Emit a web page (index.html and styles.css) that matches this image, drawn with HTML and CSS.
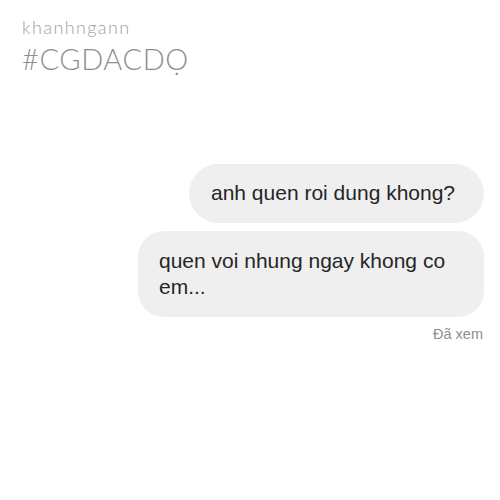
FILE: index.html
```html
<!DOCTYPE html>
<html>
<head>
<meta charset="utf-8">
<link rel="stylesheet" href="styles.css">
</head>
<body>
<div class="page">
  <header class="brand">
    <div class="user">khanhngann</div>
    <div class="tag">#CGDACDỌ</div>
  </header>
  <main class="thread">
    <div class="bubble b1">anh quen roi dung khong?</div>
    <div class="bubble b2">quen voi nhung ngay khong co em...</div>
    <div class="seen">Đã xem</div>
  </main>
</div>
</body>
</html>
```
FILE: styles.css
```css
html, body {
  margin: 0;
  padding: 0;
  background: #ffffff;
}
.page {
  width: 500px;
  height: 500px;
  box-sizing: border-box;
  padding: 17px 16px 0 22px;
  font-family: "Liberation Sans", Arial, sans-serif;
}
.brand {
  display: flex;
  flex-direction: column;
  font-family: Lato, "Open Sans", sans-serif;
  font-weight: 300;
}
.user {
  font-size: 18px;
  line-height: 20px;
  letter-spacing: 1.4px;
  color: #a0a0a0;
}
.tag {
  margin-top: 5px;
  font-size: 29px;
  line-height: 34px;
  letter-spacing: 0.6px;
  color: #8f8f8f;
}
.thread {
  margin-top: 88px;
  display: flex;
  flex-direction: column;
  align-items: flex-end;
}
.bubble {
  background: #efefef;
  color: #262626;
  font-size: 21px;
  box-sizing: border-box;
}
.b1 {
  width: 295px;
  height: 59px;
  border-radius: 30px;
  padding: 0 24px 0 22px;
  line-height: 58px;
}
.b2 {
  margin-top: 8px;
  width: 346px;
  border-radius: 26px;
  padding: 17px 20px 17px 21px;
  line-height: 26px;
}
.seen {
  margin-top: 8px;
  margin-right: 1px;
  font-size: 14.5px;
  line-height: 18px;
  color: #8e8e8e;
}
```
